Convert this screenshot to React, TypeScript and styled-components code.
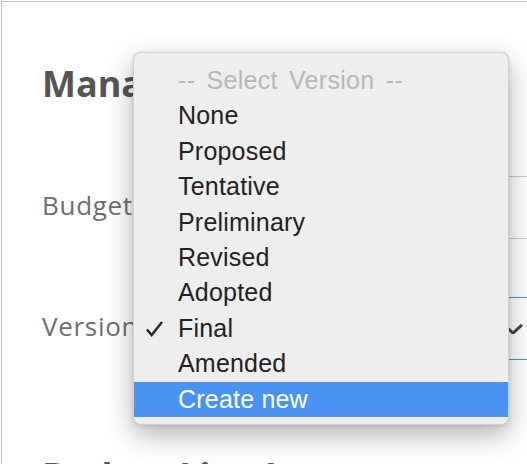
import React from 'react';
import styled, { createGlobalStyle } from 'styled-components';

const versions = ['None', 'Proposed', 'Tentative', 'Preliminary', 'Revised', 'Adopted', 'Final', 'Amended', 'Create new'];

const App: React.FC = () => {
  return (
    <>
      <GlobalStyle />
      <Frame>
        <Title>Manage Budget</Title>
        <Form>
          <Row>
            <Label>Budget</Label>
            <Field>
              <FieldText>Copy of [Budget Name]</FieldText>
            </Field>
          </Row>
          <Row>
            <Label>Version</Label>
            <Field focused>
              <FieldText>Final</FieldText>
              <Chevron viewBox='0 0 20 10'>
                <path d='M1 1 L10 9 L19 1' />
              </Chevron>
            </Field>
          </Row>
        </Form>
        <SectionTitle>Budget Line Items</SectionTitle>

        <Menu>
          <Option placeholder>-- Select Version --</Option>
          {versions.map((v) => (
            <Option key={v} active={v === 'Create new'}>
              {v === 'Final' && (
                <Check viewBox='0 0 20 18'>
                  <path d='M2 10 L7 16 L18 2' />
                </Check>
              )}
              {v}
            </Option>
          ))}
        </Menu>
      </Frame>
    </>
  );
};

export default App;

const GlobalStyle = createGlobalStyle`
  html, body {
    margin: 0;
    padding: 0;
    background: #fff;
    overflow: hidden;
  }
  body {
    font-family: 'Open Sans', 'Liberation Sans', sans-serif;
  }
`;

const Frame = styled.div`
  position: relative;
  width: 580px;
  height: 520px;
  margin: 1px 0 0 1px;
  border-top: 1px solid #bdbdbd;
  border-left: 1px solid #bdbdbd;
  padding: 60px 0 0 40px;
  box-sizing: border-box;
`;

const Title = styled.h1`
  margin: 0;
  font-size: 36px;
  line-height: 44px;
  font-weight: 700;
  color: #555;
  white-space: nowrap;
`;

const Form = styled.div`
  display: flex;
  flex-direction: column;
  gap: 58px;
  margin-top: 70px;
`;

const Row = styled.div`
  display: flex;
  align-items: center;
  height: 63px;
`;

const Label = styled.div`
  width: 140px;
  margin-top: -6px;
  font-size: 26px;
  letter-spacing: 0.7px;
  font-weight: 400;
  color: #6e6e6e;
`;

const Field = styled.div<{ focused?: boolean }>`
  flex: 1;
  height: 63px;
  box-sizing: border-box;
  display: flex;
  align-items: center;
  padding: 0 58px 0 14px;
  border: 1px solid ${(p) => (p.focused ? '#4a90e2' : '#cccccc')};
  border-right: none;
`;

const FieldText = styled.span`
  flex: 1;
  font-size: 22px;
  color: #666;
  white-space: nowrap;
`;

const Chevron = styled.svg`
  width: 20px;
  height: 10px;
  fill: none;
  stroke: #444;
  stroke-width: 3;
`;

const SectionTitle = styled.h2`
  margin: 94px 0 0;
  font-size: 36px;
  line-height: 44px;
  font-weight: 700;
  color: #555;
  white-space: nowrap;
`;

const Menu = styled.div`
  position: absolute;
  left: 131px;
  top: 50px;
  width: 376px;
  box-sizing: border-box;
  padding: 10px 0 7px;
  background: #eeeeee;
  border: 1px solid rgba(0, 0, 0, 0.12);
  border-radius: 8px;
  box-shadow: 0 10px 28px rgba(0, 0, 0, 0.3), 0 1px 4px rgba(0, 0, 0, 0.12);
  font-family: 'Liberation Sans', Arial, sans-serif;
`;

const Option = styled.div<{ active?: boolean; placeholder?: boolean }>`
  position: relative;
  height: 35.4px;
  line-height: 35.4px;
  padding-left: 44px;
  font-size: 25px;
  white-space: nowrap;
  letter-spacing: ${(p) => (p.placeholder ? '0.3px' : '0.2px')};
  word-spacing: ${(p) => (p.placeholder ? '4px' : '0')};
  color: ${(p) => (p.active ? '#fff' : p.placeholder ? '#b8b8b8' : '#222')};
  background: ${(p) => (p.active ? '#4a93f3' : 'transparent')};
`;

const Check = styled.svg`
  position: absolute;
  left: 11px;
  top: 9px;
  width: 19px;
  height: 17px;
  fill: none;
  stroke: #2a2a2a;
  stroke-width: 2.6;
`;
